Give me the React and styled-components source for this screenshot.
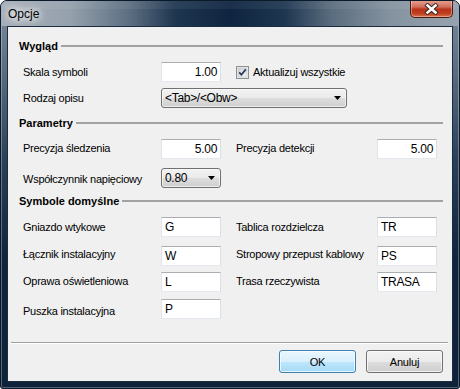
import styled, { createGlobalStyle } from "styled-components";

const GlobalStyle = createGlobalStyle`
  html, body {
    margin: 0;
    padding: 0;
    background: #fff;
  }
  body {
    font-family: "Liberation Sans", Arial, sans-serif;
  }
`;

// colour of the caption glass across its width
const glassStops = [
  [0, [165, 174, 184]],
  [0.15, [149, 161, 173]],
  [0.28, [93, 111, 130]],
  [0.38, [31, 54, 80]],
  [0.5, [14, 36, 64]],
  [0.62, [31, 54, 80]],
  [0.72, [90, 108, 126]],
  [0.85, [133, 147, 160]],
  [1, [151, 163, 174]],
];

function glassColor(t) {
  for (let i = 1; i < glassStops.length; i++) {
    const [o1, c1] = glassStops[i - 1];
    const [o2, c2] = glassStops[i];
    if (t <= o2) {
      const k = (t - o1) / (o2 - o1);
      const c = c1.map((v, j) => Math.round(v + (c2[j] - v) * k));
      return `rgb(${c[0]},${c[1]},${c[2]})`;
    }
  }
  return "rgb(151,163,174)";
}

const GLASS_W = 458;
const STRIPE = 2;
const stripes = Array.from({ length: GLASS_W / STRIPE }, (_, i) => ({
  x: i * STRIPE,
  fill: glassColor((i * STRIPE + STRIPE / 2) / GLASS_W),
}));

const Window = styled.div`
  width: 460px;
  height: 389px;
  box-sizing: border-box;
  display: flex;
  flex-direction: column;
  border: 1px solid #0b1a2b;
  border-radius: 7px 7px 3px 3px;
  overflow: hidden;
  background-color: #0e223a;
  background-image: linear-gradient(180deg, #7d8d9c 0px, #5f7285 60px, #2a4058 160px, #0f243c 260px, #0e223a 389px);
  box-shadow: inset 0 0 0 1px rgba(255, 255, 255, 0.3);
`;

const TitleBar = styled.div`
  height: 25px;
  display: grid;
  background: #5d6f82;

  & > * {
    grid-area: 1 / 1;
  }
`;

const Caption = styled.div`
  display: flex;
  justify-content: space-between;
  align-items: flex-start;
  padding-left: 7px;
`;

const Title = styled.span`
  align-self: center;
  font-size: 12px;
  color: #000;
  text-shadow: 0 0 6px #fff, 0 0 10px #fff, 0 0 14px rgba(255, 255, 255, 0.8);
`;

const CloseButton = styled.div`
  width: 43px;
  height: 18px;
  box-sizing: border-box;
  margin: -1px 6px 0 0;
  display: flex;
  align-items: center;
  justify-content: center;
  border: 1px solid #4d1a12;
  border-top: none;
  border-radius: 0 0 5px 5px;
  background: linear-gradient(180deg, #e8a494 0%, #d0705c 40%, #b8321a 55%, #c0401f 80%, #d9734f 100%);
  box-shadow: inset 0 0 0 1px rgba(255, 255, 255, 0.35);
`;

const Client = styled.div`
  flex: 1;
  margin: 0 6px 6px;
  border: 1px solid #1b2c40;
  background: #f0f0f0;
  display: flex;
  flex-direction: column;
  font-size: 11px;
  color: #000;
`;

const GroupHeader = styled.div`
  display: flex;
  align-items: center;
  gap: 3px;
  height: 14px;
  margin: ${(p) => p.$top}px 9px 0 11px;
  font-weight: bold;

  &::after {
    content: "";
    flex: 1;
    height: 2px;
    background: #a2a2a2;
  }
`;

const Row = styled.div`
  display: grid;
  grid-template-columns: 138px 60px 15px 141px 60px;
  align-items: center;
  height: 20px;
  margin: ${(p) => p.$top}px 0 0 15px;
`;

const Label = styled.span`
  grid-column: ${(p) => p.$col || 1};
  letter-spacing: -0.25px;
  white-space: nowrap;
  margin: ${(p) => (p.$dy > 0 ? p.$dy * 2 : 0)}px 0 ${(p) => (p.$dy < 0 ? -p.$dy * 2 : 0)}px;
`;

const TextBox = styled.div`
  grid-column: ${(p) => p.$col || 2};
  width: 60px;
  height: 20px;
  box-sizing: border-box;
  display: flex;
  align-items: center;
  justify-content: ${(p) => (p.$right ? "flex-end" : "flex-start")};
  padding: 0 3px 0 3px;
  background: #fff;
  border: 1px solid;
  border-color: #abadb3 #dbdfe6 #e3e9ef #e2e3ea;
  font-size: 12px;
  letter-spacing: -0.3px;
`;

const Combo = styled.div`
  grid-column: 2 / span 4;
  width: ${(p) => p.$width}px;
  height: 20px;
  box-sizing: border-box;
  display: flex;
  align-items: center;
  justify-content: space-between;
  padding: 0 5px 0 3px;
  border: 1px solid #707070;
  border-radius: 3px;
  background: linear-gradient(180deg, #f2f2f2 0%, #ebebeb 50%, #dddddd 51%, #cfcfcf 100%);
  box-shadow: inset 0 0 0 1px rgba(255, 255, 255, 0.6);
  font-size: 12px;
  letter-spacing: -0.3px;
`;

const CheckField = styled.label`
  grid-column: 4 / span 2;
  display: flex;
  align-items: center;
  gap: 4px;
  letter-spacing: -0.25px;
  white-space: nowrap;
`;

const Separator = styled.div`
  margin: 23px 4px 0 3px;
  height: 1px;
  background: #a0a0a0;
  border-bottom: 1px solid #fff;
`;

const ButtonBar = styled.div`
  display: flex;
  justify-content: flex-end;
  gap: 10px;
  margin: 6px 9px 0 0;
`;

const Button = styled.div`
  width: 77px;
  height: 23px;
  box-sizing: border-box;
  display: flex;
  align-items: center;
  justify-content: center;
  border: 1px solid ${(p) => (p.$primary ? "#3c7fb1" : "#707070")};
  border-radius: 3px;
  background: ${(p) =>
    p.$primary
      ? "linear-gradient(180deg, #eaf6fd 0%, #d9f0fc 50%, #bee6fd 51%, #a7d9f5 100%)"
      : "linear-gradient(180deg, #f2f2f2 0%, #ebebeb 50%, #dddddd 51%, #cfcfcf 100%)"};
  box-shadow: inset 0 0 0 1px rgba(255, 255, 255, 0.7);
  font-size: 11px;
  letter-spacing: -0.2px;
`;

function Glass() {
  return (
    <svg width={GLASS_W} height="25" viewBox={`0 0 ${GLASS_W} 25`}>
      {stripes.map((s) => (
        <rect key={s.x} x={s.x} y="0" width={STRIPE} height="25" fill={s.fill} />
      ))}
      <rect x="0" y="0" width={GLASS_W} height="8" fill="#fff" fillOpacity="0.06" />
    </svg>
  );
}

function CloseGlyph() {
  return (
    <svg width="15" height="12" viewBox="0 0 15 12">
      <path d="M3.5 2.5 L11.5 9.5 M11.5 2.5 L3.5 9.5" stroke="#3a2a28" strokeWidth="4.4" strokeLinecap="square" />
      <path d="M3.5 2.5 L11.5 9.5 M11.5 2.5 L3.5 9.5" stroke="#fff" strokeWidth="2.5" strokeLinecap="square" />
    </svg>
  );
}

function Arrow() {
  return (
    <svg width="7" height="4" viewBox="0 0 7 4">
      <polygon points="0,0 7,0 3.5,4" fill="#000" />
    </svg>
  );
}

function CheckBox() {
  return (
    <svg width="13" height="13" viewBox="0 0 13 13">
      <defs>
        <linearGradient id="cbfill" x1="0" y1="0" x2="1" y2="1">
          <stop offset="0" stopColor="#cbd2dc" />
          <stop offset="1" stopColor="#f4f6f8" />
        </linearGradient>
      </defs>
      <rect x="0.5" y="0.5" width="12" height="12" fill="#f4f4f4" stroke="#8e8f8f" />
      <rect x="2" y="2" width="9" height="9" fill="url(#cbfill)" stroke="#aeb3b9" strokeWidth="0.5" />
      <path d="M3.2 6.4 L5.4 8.8 L9.8 3.4" fill="none" stroke="#28384f" strokeWidth="1.7" />
    </svg>
  );
}

export default function App() {
  return (
    <>
      <GlobalStyle />
      <Window>
        <TitleBar>
          <Glass />
          <Caption>
            <Title>Opcje</Title>
            <CloseButton>
              <CloseGlyph />
            </CloseButton>
          </Caption>
        </TitleBar>
        <Client>
          <GroupHeader $top={12}>Wygląd</GroupHeader>
          <Row $top={9}>
            <Label>Skala symboli</Label>
            <TextBox $right>1.00</TextBox>
            <CheckField>
              <CheckBox />
              Aktualizuj wszystkie
            </CheckField>
          </Row>
          <Row $top={6}>
            <Label>Rodzaj opisu</Label>
            <Combo $width={186}>
              <span>&lt;Tab&gt;/&lt;Obw&gt;</span>
              <Arrow />
            </Combo>
          </Row>

          <GroupHeader $top={8}>Parametry</GroupHeader>
          <Row $top={9}>
            <Label $dy={-1}>Precyzja śledzenia</Label>
            <TextBox $right>5.00</TextBox>
            <Label $col={4} $dy={-1}>Precyzja detekcji</Label>
            <TextBox $col={5} $right>5.00</TextBox>
          </Row>
          <Row $top={9}>
            <Label $dy={1}>Współczynnik napięciowy</Label>
            <Combo $width={60}>
              <span>0.80</span>
              <Arrow />
            </Combo>
          </Row>

          <GroupHeader $top={6}>Symbole domyślne</GroupHeader>
          <Row $top={9}>
            <Label>Gniazdo wtykowe</Label>
            <TextBox>G</TextBox>
            <Label $col={4}>Tablica rozdzielcza</Label>
            <TextBox $col={5}>TR</TextBox>
          </Row>
          <Row $top={9}>
            <Label $dy={-2}>Łącznik instalacyjny</Label>
            <TextBox>W</TextBox>
            <Label $col={4} $dy={-2}>Stropowy przepust kablowy</Label>
            <TextBox $col={5}>PS</TextBox>
          </Row>
          <Row $top={6}>
            <Label $dy={-1}>Oprawa oświetleniowa</Label>
            <TextBox>L</TextBox>
            <Label $col={4} $dy={-1}>Trasa rzeczywista</Label>
            <TextBox $col={5}>TRASA</TextBox>
          </Row>
          <Row $top={7}>
            <Label $dy={2}>Puszka instalacyjna</Label>
            <TextBox>P</TextBox>
          </Row>

          <Separator />
          <ButtonBar>
            <Button $primary>OK</Button>
            <Button>Anuluj</Button>
          </ButtonBar>
        </Client>
      </Window>
    </>
  );
}
